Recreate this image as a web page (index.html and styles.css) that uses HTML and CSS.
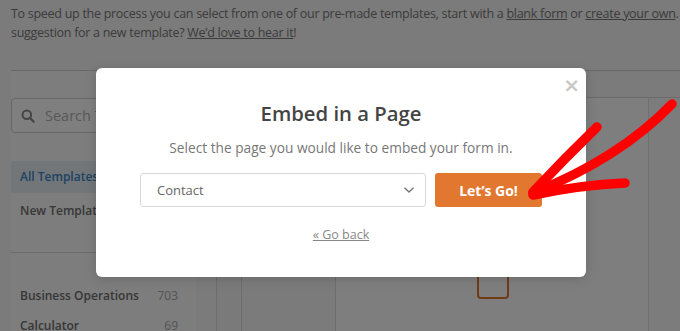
FILE: index.html
```html
<!DOCTYPE html>
<html>
<head>
<meta charset="utf-8">
<link rel="stylesheet" href="styles.css">
</head>
<body>
<div class="screen">
  <div class="page">
    <p class="intro">To speed up the process you can select from one of our pre-made templates, start with a <a href="#">blank form</a> or <a href="#">create your own</a>. Have a<br>suggestion for a new template? <a href="#">We’d love to hear it</a>!</p>
    <div class="divider"></div>
    <div class="main">
      <aside class="sidebar">
        <div class="search">
          <svg width="14" height="14" viewBox="0 0 14 14"><circle cx="5.8" cy="5.8" r="4.3" fill="none" stroke="#888" stroke-width="2"/><path d="M9 9l3.6 3.6" stroke="#888" stroke-width="2.2" stroke-linecap="round"/></svg>
          <span>Search Templates</span>
        </div>
        <ul class="cats">
          <li class="active">All Templates</li>
          <li>New Templates</li>
        </ul>
        <div class="side-line"></div>
        <ul class="cats counts">
          <li><span>Business Operations</span><span class="num">703</span></li>
          <li><span>Calculator</span><span class="num">69</span></li>
        </ul>
      </aside>
      <section class="content">
        <div class="gutter"></div>
        <div class="list">
          <div class="card-col"></div>
          <div class="card">
            <div class="tpl-icon"></div>
          </div>
          <div class="card-end"></div>
        </div>
      </section>
    </div>
  </div>
  <div class="backdrop"></div>
  <div class="modal">
    <span class="close">×</span>
    <h2 class="title">Embed in a Page</h2>
    <p class="sub">Select the page you would like to embed your form in.</p>
    <div class="row">
      <div class="select"><span>Contact</span>
        <svg width="12" height="8" viewBox="0 0 12 8"><path d="M1.5 1.8l4.5 4.3 4.5-4.3" fill="none" stroke="#777" stroke-width="1.4"/></svg>
      </div>
      <button class="go">Let’s Go!</button>
    </div>
    <a class="back" href="#">« Go back</a>
  </div>
  <svg class="arrow" width="680" height="331" viewBox="0 0 680 331">
    <g fill="none" stroke="#ff0000" stroke-width="9.5" stroke-linecap="round" stroke-linejoin="round">
      <path d="M672 104 Q620 158 533 193"/>
      <path d="M597 127 Q565 158 533 192"/>
      <path d="M625 183 Q580 185 533 195"/>
    </g>
  </svg>
</div>
</body>
</html>
```
FILE: styles.css
```css
* { box-sizing: border-box; }
html, body { margin: 0; padding: 0; }
body { font-family: "Open Sans", "Noto Sans", sans-serif; }
.screen { position: relative; width: 680px; height: 331px; overflow: hidden; background: #f6f6f6; }
.page { padding: 0 0 0 11px; color: #777; }
.intro { margin: 0; padding-top: 4px; font-size: 12.5px; letter-spacing: -0.28px; line-height: 19px; white-space: nowrap; color: #787878; }
.intro a { color: #787878; text-decoration: underline; }
.divider { height: 1px; background: #d0d0d0; margin-top: 28px; width: 100%; }
.main { display: grid; grid-template-columns: 185px 1fr; column-gap: 20px; }
.sidebar { padding-top: 27px; background: #fafafa; }
.search { height: 35px; border: 1px solid #cfcfcf; border-radius: 4px; background: #fff; display: flex; align-items: center; gap: 10px; padding-left: 9px; font-size: 14.5px; color: #b0b0b0; }
.search svg { flex: none; }
.cats { list-style: none; margin: 0; padding: 0; }
.cats li { font-size: 12px; font-weight: 600; color: #6e6e6e; padding: 0 9px; height: 32px; line-height: 32px; }
.cats:first-of-type { margin-top: 28px; }
.cats li + li { margin-top: 2px; }
.cats li.active { background: #e4ecf3; color: #3d86c6; border-radius: 3px 0 0 3px; }
.side-line { height: 1px; background: #d6d6d6; margin: 25px 0 28px; }
.counts li { display: flex; justify-content: space-between; padding-right: 18px; height: 30px; line-height: 30px; }
.counts li + li { margin-top: 0; }
.counts .num { font-weight: 400; color: #a8a8a8; }
.content { display: flex; border-left: 1px solid #dadada; min-height: 262px; background: #f3f3f3; }
.gutter { width: 25px; background: #f5f5f5; border-right: 1px solid #dadada; }
.list { flex: 1; display: flex; padding-top: 26px; background: #f6f6f6; }
.card-col { width: 94px; border-right: 1px solid #dcdcdc; }
.card { width: 313px; border-top: 1px solid #d6d6d6; border-right: 1px solid #e0e0e0; position: relative; background: #fcfcfc; }
.card-end { flex: 1; border-top: 1px solid #d6d6d6; background: #f8f8f8; }
.tpl-icon { position: absolute; left: 141px; top: 156px; width: 32px; height: 45px; border: 2px solid #e27730; border-radius: 4px; }
.backdrop { position: absolute; inset: 0; background: rgba(0,0,0,0.5); }
.modal { position: absolute; left: 96px; top: 68px; width: 490px; height: 209px; background: #fff; border-radius: 6px; box-shadow: 0 2px 12px rgba(0,0,0,0.15); text-align: center; padding-top: 30px; }
.close { position: absolute; right: 6px; top: 5px; font-size: 20px; font-weight: 700; color: #c8c8c8; line-height: 24px; font-family: "DejaVu Sans", sans-serif; }
.title { margin: 0; font-size: 20.3px; font-weight: 600; color: #444; line-height: 30px; }
.sub { margin: 10px 0 0; font-size: 13.7px; color: #777; line-height: 20px; }
.row { display: flex; justify-content: center; gap: 9px; margin-top: 15px; }
.select { width: 286px; height: 34px; border: 1px solid #d8d8d8; border-radius: 3px; display: flex; align-items: center; justify-content: space-between; padding: 0 10px 0 16px; font-size: 13px; color: #666; }
.go { width: 107px; height: 34px; border: 0; border-radius: 3px; background: #e27730; color: #fff; font-family: inherit; font-size: 14px; font-weight: 700; }
.back { display: inline-block; margin-top: 19px; font-size: 12.5px; color: #888; text-decoration: underline; }
.arrow { position: absolute; left: 0; top: 0; }
```
